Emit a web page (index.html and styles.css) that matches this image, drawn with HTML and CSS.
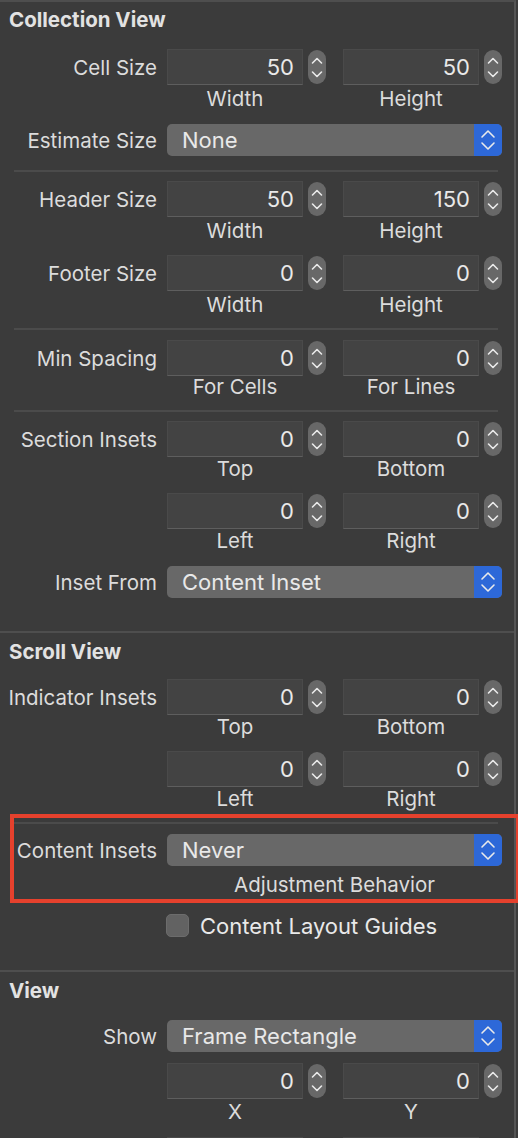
FILE: index.html
```html
<!DOCTYPE html>
<html>
<head>
<meta charset="utf-8">
<link rel="stylesheet" href="styles.css">
</head>
<body>
<div class="panel">

  <section class="sec sec-collection">
    <h2 class="title">Collection View</h2>

    <div class="row r-cell">
      <span class="label">Cell Size</span>
      <div class="pair"><div class="field">50</div><span class="stepper"><svg viewBox="0 0 18 34"><path d="M4.5 13 L9 8.5 L13.5 13"/><path d="M4.5 22 L9 26.5 L13.5 22"/></svg></span></div>
      <div class="pair"><div class="field">50</div><span class="stepper"><svg viewBox="0 0 18 34"><path d="M4.5 13 L9 8.5 L13.5 13"/><path d="M4.5 22 L9 26.5 L13.5 22"/></svg></span></div>
    </div>
    <div class="sub s-cell"><span>Width</span><span>Height</span></div>

    <div class="row popup-row r-est">
      <span class="label">Estimate Size</span>
      <div class="popup"><span class="popup-text">None</span><span class="popup-arrows"><svg viewBox="0 0 28 32"><path d="M8 13 L14 7 L20 13"/><path d="M8 19 L14 25 L20 19"/></svg></span></div>
    </div>

    <hr class="sep sep-est">

    <div class="row r-header">
      <span class="label">Header Size</span>
      <div class="pair"><div class="field">50</div><span class="stepper"><svg viewBox="0 0 18 34"><path d="M4.5 13 L9 8.5 L13.5 13"/><path d="M4.5 22 L9 26.5 L13.5 22"/></svg></span></div>
      <div class="pair"><div class="field">150</div><span class="stepper"><svg viewBox="0 0 18 34"><path d="M4.5 13 L9 8.5 L13.5 13"/><path d="M4.5 22 L9 26.5 L13.5 22"/></svg></span></div>
    </div>
    <div class="sub"><span>Width</span><span>Height</span></div>

    <div class="row r-next">
      <span class="label">Footer Size</span>
      <div class="pair"><div class="field">0</div><span class="stepper"><svg viewBox="0 0 18 34"><path d="M4.5 13 L9 8.5 L13.5 13"/><path d="M4.5 22 L9 26.5 L13.5 22"/></svg></span></div>
      <div class="pair"><div class="field">0</div><span class="stepper"><svg viewBox="0 0 18 34"><path d="M4.5 13 L9 8.5 L13.5 13"/><path d="M4.5 22 L9 26.5 L13.5 22"/></svg></span></div>
    </div>
    <div class="sub"><span>Width</span><span>Height</span></div>

    <hr class="sep sep-mid">

    <div class="row r-min">
      <span class="label">Min Spacing</span>
      <div class="pair"><div class="field">0</div><span class="stepper"><svg viewBox="0 0 18 34"><path d="M4.5 13 L9 8.5 L13.5 13"/><path d="M4.5 22 L9 26.5 L13.5 22"/></svg></span></div>
      <div class="pair"><div class="field">0</div><span class="stepper"><svg viewBox="0 0 18 34"><path d="M4.5 13 L9 8.5 L13.5 13"/><path d="M4.5 22 L9 26.5 L13.5 22"/></svg></span></div>
    </div>
    <div class="sub s-tight"><span>For Cells</span><span>For Lines</span></div>

    <hr class="sep sep-mid">

    <div class="row r-min2">
      <span class="label">Section Insets</span>
      <div class="pair"><div class="field">0</div><span class="stepper"><svg viewBox="0 0 18 34"><path d="M4.5 13 L9 8.5 L13.5 13"/><path d="M4.5 22 L9 26.5 L13.5 22"/></svg></span></div>
      <div class="pair"><div class="field">0</div><span class="stepper"><svg viewBox="0 0 18 34"><path d="M4.5 13 L9 8.5 L13.5 13"/><path d="M4.5 22 L9 26.5 L13.5 22"/></svg></span></div>
    </div>
    <div class="sub s-2"><span>Top</span><span>Bottom</span></div>

    <div class="row r-next">
      <span class="label"></span>
      <div class="pair"><div class="field">0</div><span class="stepper"><svg viewBox="0 0 18 34"><path d="M4.5 13 L9 8.5 L13.5 13"/><path d="M4.5 22 L9 26.5 L13.5 22"/></svg></span></div>
      <div class="pair"><div class="field">0</div><span class="stepper"><svg viewBox="0 0 18 34"><path d="M4.5 13 L9 8.5 L13.5 13"/><path d="M4.5 22 L9 26.5 L13.5 22"/></svg></span></div>
    </div>
    <div class="sub s-2"><span>Left</span><span>Right</span></div>

    <div class="row popup-row r-est">
      <span class="label">Inset From</span>
      <div class="popup"><span class="popup-text">Content Inset</span><span class="popup-arrows"><svg viewBox="0 0 28 32"><path d="M8 13 L14 7 L20 13"/><path d="M8 19 L14 25 L20 19"/></svg></span></div>
    </div>
  </section>

  <hr class="divider div-1">

  <section class="sec sec-scroll">
    <h2 class="title t-scroll">Scroll View</h2>

    <div class="row r-ind">
      <span class="label">Indicator Insets</span>
      <div class="pair"><div class="field">0</div><span class="stepper"><svg viewBox="0 0 18 34"><path d="M4.5 13 L9 8.5 L13.5 13"/><path d="M4.5 22 L9 26.5 L13.5 22"/></svg></span></div>
      <div class="pair"><div class="field">0</div><span class="stepper"><svg viewBox="0 0 18 34"><path d="M4.5 13 L9 8.5 L13.5 13"/><path d="M4.5 22 L9 26.5 L13.5 22"/></svg></span></div>
    </div>
    <div class="sub s-2"><span>Top</span><span>Bottom</span></div>

    <div class="row r-next">
      <span class="label"></span>
      <div class="pair"><div class="field">0</div><span class="stepper"><svg viewBox="0 0 18 34"><path d="M4.5 13 L9 8.5 L13.5 13"/><path d="M4.5 22 L9 26.5 L13.5 22"/></svg></span></div>
      <div class="pair"><div class="field">0</div><span class="stepper"><svg viewBox="0 0 18 34"><path d="M4.5 13 L9 8.5 L13.5 13"/><path d="M4.5 22 L9 26.5 L13.5 22"/></svg></span></div>
    </div>
    <div class="sub s-2"><span>Left</span><span>Right</span></div>

    <div class="highlight">
      <hr class="sep sep-hl">
      <div class="row popup-row r-ci">
        <span class="label">Content Insets</span>
        <div class="popup"><span class="popup-text">Never</span><span class="popup-arrows"><svg viewBox="0 0 28 32"><path d="M8 13 L14 7 L20 13"/><path d="M8 19 L14 25 L20 19"/></svg></span></div>
      </div>
      <div class="sub sub-wide"><span>Adjustment Behavior</span></div>
    </div>

    <div class="check-row">
      <span class="checkbox"></span>
      <span class="check-label">Content Layout Guides</span>
    </div>
  </section>

  <hr class="divider div-2">

  <section class="sec sec-view">
    <h2 class="title t-view">View</h2>

    <div class="row popup-row r-show">
      <span class="label">Show</span>
      <div class="popup"><span class="popup-text">Frame Rectangle</span><span class="popup-arrows"><svg viewBox="0 0 28 32"><path d="M8 13 L14 7 L20 13"/><path d="M8 19 L14 25 L20 19"/></svg></span></div>
    </div>

    <div class="row r-xy">
      <span class="label"></span>
      <div class="pair"><div class="field">0</div><span class="stepper"><svg viewBox="0 0 18 34"><path d="M4.5 13 L9 8.5 L13.5 13"/><path d="M4.5 22 L9 26.5 L13.5 22"/></svg></span></div>
      <div class="pair"><div class="field">0</div><span class="stepper"><svg viewBox="0 0 18 34"><path d="M4.5 13 L9 8.5 L13.5 13"/><path d="M4.5 22 L9 26.5 L13.5 22"/></svg></span></div>
    </div>
    <div class="sub s-xy"><span>X</span><span>Y</span></div>

    <div class="row r-last">
      <span class="label"></span>
      <div class="pair"><div class="field"></div><span class="stepper"></span></div>
      <div class="pair"><div class="field"></div><span class="stepper"></span></div>
    </div>
  </section>

</div>
</body>
</html>
```

FILE: styles.css
```css
:root {
  --bg: #3b3b3b;
  --text: #dcdcdc;
  --value: #e9e9e9;
  --field: #434343;
  --ctrl: #686868;
  --blue: #2d68d8;
  --red: #e5412d;
}

* { box-sizing: border-box; }

html, body {
  margin: 0;
  padding: 0;
  background: var(--bg);
  height: 100%;
  overflow: hidden;
}

body {
  font-family: Inter, "Noto Sans", "Liberation Sans", sans-serif;
  color: var(--text);
}

.panel {
  width: 516px;
  min-height: 1138px;
  border-top: 2px solid #4e4e4e;
  border-right: 2px solid #555;
}

.sec { display: block; }

.title {
  margin: 0;
  padding: 6px 0 0 9px;
  font-size: 20.5px;
  font-weight: 700;
  line-height: 24px;
  height: 30px;
  color: #e2e2e2;
}

.t-scroll { padding-top: 7px; height: 31px; }
.t-view { padding-top: 7px; height: 31px; }

.row {
  display: flex;
  align-items: center;
  height: 36px;
}

.label {
  width: 157px;
  margin-right: 10px;
  text-align: right;
  font-size: 20.5px;
  white-space: nowrap;
  color: var(--text);
}

.pair {
  display: flex;
  align-items: center;
  width: 159px;
  gap: 5px;
}

.pair + .pair {
  margin-left: 17px;
}

.field {
  flex: 1;
  height: 36px;
  background: var(--field);
  border: 1px solid #4a4a4a;
  border-bottom: 1px solid #5e5e5e;
  text-align: right;
  padding-right: 8px;
  font-size: 22px;
  line-height: 34px;
  color: var(--value);
}

.stepper {
  width: 18px;
  height: 34px;
  flex: none;
  border-radius: 9px;
  background: var(--ctrl);
  display: block;
}

.stepper svg, .popup-arrows svg {
  display: block;
  width: 100%;
  height: 100%;
  fill: none;
  stroke: #eaeaea;
  stroke-width: 1.6;
  stroke-linecap: round;
  stroke-linejoin: round;
}

.sub {
  display: flex;
  height: 20px;
  line-height: 20px;
  margin-top: 4px;
  padding-left: 167px;
  font-size: 20.5px;
}

.sub span {
  width: 136px;
  text-align: center;
  white-space: nowrap;
}

.sub span + span {
  margin-left: 40px;
}

.s-tight { margin-top: 1px; }
.s-2 { margin-top: 2px; }
.s-xy { margin-top: 3px; }

.sub-wide span { width: 335px; }

.popup-row { height: 32px; }

.popup {
  width: 335px;
  height: 32px;
  display: flex;
  align-items: stretch;
  border-radius: 5px;
  background: var(--ctrl);
  overflow: hidden;
}

.popup-text {
  flex: 1;
  padding-left: 15px;
  font-size: 22px;
  line-height: 32px;
  color: var(--value);
  white-space: nowrap;
}

.popup-arrows {
  width: 28px;
  background: var(--blue);
  display: block;
}

.sep {
  border: 0;
  height: 2px;
  background: #4b4b4b;
  margin: 0 16px 0 14px;
}

.divider {
  border: 0;
  height: 2px;
  background: #4e4e4e;
  margin: 0;
}

/* vertical rhythm */
.r-cell { margin-top: 17px; }
.s-cell { margin-top: 4px; }
.r-est { margin-top: 15px; }
.sep-est { margin-top: 14px; }
.r-header { margin-top: 9px; }
.r-next { margin-top: 14px; }
.sep-mid { margin-top: 13px; }
.r-min { margin-top: 10px; }
.r-min2 { margin-top: 9px; }
.div-1 { margin-top: 33px; }

.r-ind { margin-top: 15px; }

.highlight {
  position: relative;
}

.highlight::after {
  content: "";
  position: absolute;
  left: 10px;
  width: 502px;
  top: -8px;
  bottom: -8px;
  border: 4px solid var(--red);
  pointer-events: none;
}

.sep-hl { margin-top: 13px; }
.r-ci { margin-top: 10px; }
.highlight .sub { margin-top: 9px; }

.check-row {
  display: flex;
  align-items: center;
  margin-top: 19px;
  padding-left: 166px;
  height: 23px;
}

.checkbox {
  width: 23px;
  height: 23px;
  border-radius: 5px;
  background: #626262;
  border: 1px solid #6c6c6c;
}

.check-label {
  margin-left: 11px;
  font-size: 22px;
  color: var(--value);
}

.div-2 { margin-top: 33px; }

.r-show { margin-top: 17px; }
.r-xy { margin-top: 11px; }
.r-last { margin-top: 15px; }
```
